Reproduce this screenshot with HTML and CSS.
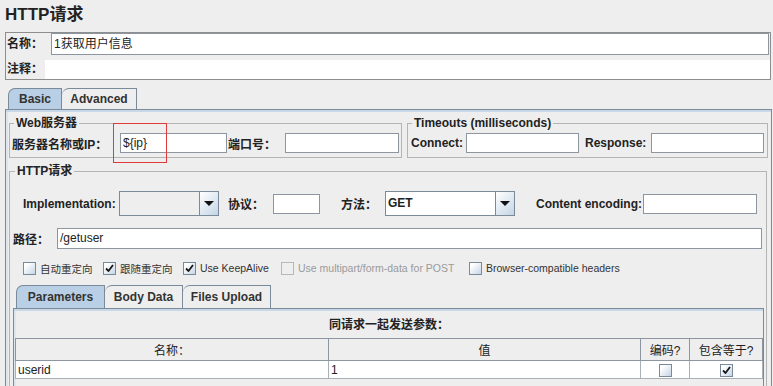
FILE: index.html
```html
<!DOCTYPE html>
<html>
<head>
    <title>HTTP请求</title>
    <link rel="stylesheet" href="styles.css">
</head>
<body>

<div class="title">HTTP请求</div>

<div class="namebox">
    <div class="nameRow">
        <label class="nameLabel">名称：</label>
        <div class="textBox nameField">1获取用户信息</div>
    </div>
    <div class="commentRow">
        <label class="commentLabel">注释：</label>
        <div class="commentField"></div>
    </div>
</div>

<div class="tabBar outerTabs">
    <div class="tab active basicTab">Basic</div>
    <div class="tab advTab">Advanced</div>
</div>

<div class="tabPanel">
    <div class="topGroups">
        <fieldset class="group webGroup">
            <legend>Web服务器</legend>
            <div class="groupRow">
                <label class="serverLabel">服务器名称或IP：</label>
                <div class="textBox serverField">${ip}</div>
                <label class="portLabel">端口号：</label>
                <div class="textBox portField"></div>
            </div>
        </fieldset>
        <fieldset class="group timeoutGroup">
            <legend>Timeouts (milliseconds)</legend>
            <div class="groupRow">
                <label class="connectLabel">Connect:</label>
                <div class="textBox timeField"></div>
                <label class="responseLabel">Response:</label>
                <div class="textBox timeField"></div>
            </div>
        </fieldset>
    </div>

    <fieldset class="group httpGroup">
        <legend>HTTP请求</legend>
        <div class="implRow">
            <label class="implLabel">Implementation:</label>
            <div class="combo implCombo">
                <div class="comboText"></div>
                <div class="comboBtn"><span class="arrow"></span></div>
            </div>
            <label class="protoLabel">协议：</label>
            <div class="textBox protoField"></div>
            <label class="methodLabel">方法：</label>
            <div class="combo methodCombo">
                <div class="comboText">GET</div>
                <div class="comboBtn"><span class="arrow"></span></div>
            </div>
            <label class="encLabel">Content encoding:</label>
            <div class="textBox encField"></div>
        </div>

        <div class="pathRow">
            <label class="pathLabel">路径：</label>
            <div class="textBox pathField">/getuser</div>
        </div>

        <div class="checkRow">
            <div class="checkItem w80"><span class="check"></span>自动重定向</div>
            <div class="checkItem w80"><span class="check checked"><svg width="9" height="8" viewBox="0 0 9 8"><path d="M1 4.5 L3.5 7 L8 1" fill="none" stroke="#1a1a1a" stroke-width="1.8"/></svg></span>跟随重定向</div>
            <div class="checkItem w98"><span class="check checked"><svg width="9" height="8" viewBox="0 0 9 8"><path d="M1 4.5 L3.5 7 L8 1" fill="none" stroke="#1a1a1a" stroke-width="1.8"/></svg></span>Use KeepAlive</div>
            <div class="checkItem w188 disabled"><span class="check off"></span>Use multipart/form-data for POST</div>
            <div class="checkItem"><span class="check"></span>Browser-compatible headers</div>
        </div>

        <div class="tabBar innerTabs">
            <div class="tab active paramTab">Parameters</div>
            <div class="tab bodyTab">Body Data</div>
            <div class="tab filesTab">Files Upload</div>
        </div>
        <div class="innerPanel">
            <div class="paramTitle">同请求一起发送参数：</div>
            <table class="paramTable">
                <thead>
                    <tr>
                        <th class="colName">名称：</th>
                        <th class="colValue">值</th>
                        <th class="colEnc">编码?</th>
                        <th class="colEq">包含等于?</th>
                    </tr>
                </thead>
                <tbody>
                    <tr>
                        <td>userid</td>
                        <td>1</td>
                        <td class="center"><span class="check small"></span></td>
                        <td class="center"><span class="check small checked"><svg width="9" height="8" viewBox="0 0 9 8"><path d="M1 4.5 L3.5 7 L8 1" fill="none" stroke="#1a1a1a" stroke-width="1.8"/></svg></span></td>
                    </tr>
                </tbody>
            </table>
        </div>
    </fieldset>
</div>

<div class="redMark"></div>

</body>
</html>
```

FILE: styles.css
```css
body {
    margin: 0;
    background-color: #eeeeee;
    font-family: "Liberation Sans", "Noto Sans CJK SC", sans-serif;
    font-size: 12px;
    font-weight: bold;
    color: #222222;
    width: 773px;
    height: 386px;
    overflow: hidden;
    position: relative;
}
label {
    white-space: nowrap;
}
.title {
    font-size: 17px;
    height: 32px;
    line-height: 30px;
    padding-left: 5px;
    box-sizing: border-box;
}

/* name / comment box */
.namebox {
    margin: 0 2px 0 5px;
    border: 1px solid #8e8e8e;
    height: 46px;
}
.nameRow {
    display: flex;
    height: 22px;
}
.nameLabel {
    width: 44px;
    padding-left: 1px;
    line-height: 22px;
}
.textBox {
    background-color: #ffffff;
    border: 1px solid #8c96a0;
    box-sizing: border-box;
    height: 20px;
    line-height: 18px;
    padding-left: 2px;
    font-weight: normal;
    white-space: nowrap;
}
.nameField {
    flex: 1;
    height: 22px;
    line-height: 20px;
    margin-right: 1px;
}
.commentRow {
    display: flex;
    margin-top: 5px;
    height: 19px;
}
.commentLabel {
    width: 38px;
    padding-left: 1px;
    line-height: 19px;
}
.commentField {
    flex: 1;
    background-color: #ffffff;
}

/* tabs */
.tabBar {
    display: flex;
}
.outerTabs {
    margin: 8px 0 0 8px;
    height: 21px;
}
.tab {
    box-sizing: border-box;
    border: 1px solid #7a8a99;
    border-bottom: none;
    border-top-left-radius: 7px;
    background-color: #eeeeee;
    text-align: center;
    line-height: 20px;
    color: #333333;
}
.tab.active {
    background-color: #b8cfe5;
}
.basicTab { width: 54px; }
.advTab { width: 75px; border-left: none; }

.tabPanel {
    margin-left: 5px;
    width: 767px;
    height: 277px;
    box-sizing: border-box;
    border: 1px solid #7a8a99;
    border-bottom: none;
    box-shadow: inset 0 2px 0 #c8d8e8, inset 2px 0 0 #dde6ef;
    padding: 6px 2px 0 3px;
    overflow: hidden;
}

/* groups */
.topGroups {
    display: flex;
    gap: 5px;
}
.group {
    border: 1px solid #b4b4b4;
    margin: 0;
    padding: 3px 2px 4px 2px;
    min-width: 0;
}
.group legend {
    padding: 0 2px;
    margin-left: 2px;
    line-height: 14px;
}
.webGroup { width: 393px; box-sizing: border-box; }
.timeoutGroup { width: 361px; box-sizing: border-box; }
.groupRow {
    display: flex;
    align-items: center;
    height: 20px;
}
.serverLabel { width: 108px; }
.serverField { width: 107px; }
.portLabel { width: 57px; margin-left: 1px; }
.portField { width: 114px; }
.connectLabel { width: 55px; margin-left: 1px; }
.responseLabel { width: 66px; margin-left: 6px; }
.timeField { width: 113px; }

.httpGroup {
    margin-top: 6px;
    width: 758px;
    box-sizing: border-box;
    padding: 13px 2px 0 3px;
    height: 240px;
}
.implRow {
    display: flex;
    align-items: center;
    height: 25px;
    padding-left: 10px;
}
.implLabel { width: 96px; }
.protoLabel { width: 45px; margin-left: 9px; }
.protoField { width: 47px; }
.methodLabel { width: 44px; margin-left: 21px; }
.encLabel { width: 107px; margin-left: 21px; }
.encField { width: 114px; }

.combo {
    display: flex;
    height: 25px;
    box-sizing: border-box;
    border: 1px solid #7a8a99;
}
.implCombo { width: 100px; }
.methodCombo { width: 130px; }
.comboText {
    flex: 1;
    line-height: 23px;
    padding-left: 2px;
}
.implCombo .comboText { background-color: #eeeeee; }
.methodCombo .comboText { background-color: #ffffff; }
.comboBtn {
    width: 18px;
    border-left: 1px solid #7a8a99;
    background: linear-gradient(135deg, #ffffff, #c4d5e6);
    display: flex;
    align-items: center;
    justify-content: center;
}
.arrow {
    width: 0;
    height: 0;
    border-left: 5px solid transparent;
    border-right: 5px solid transparent;
    border-top: 5px solid #111111;
}

.pathRow {
    display: flex;
    align-items: center;
    margin-top: 12px;
    height: 21px;
}
.pathLabel { width: 44px; }
.pathField { width: 705px; height: 21px; line-height: 19px; }

.checkRow {
    display: flex;
    align-items: center;
    margin-top: 12px;
    height: 14px;
    padding-left: 10px;
    font-size: 10.5px;
    font-weight: normal;
    color: #333333;
}
.checkItem {
    display: flex;
    align-items: center;
    white-space: nowrap;
}
.w80 { width: 80px; }
.w98 { width: 98px; }
.w188 { width: 188px; }
.disabled { color: #9a9a9a; }
.check {
    width: 13px;
    height: 13px;
    box-sizing: border-box;
    border: 1px solid #7a8a99;
    background: linear-gradient(135deg, #ffffff 20%, #c4d5e6);
    margin-right: 4px;
    display: inline-flex;
    align-items: center;
    justify-content: center;
}
.check.off {
    background: #eeeeee;
    border-color: #b8b8b8;
}
.check.small {
    margin: 0;
}

.innerTabs {
    margin: 10px 0 0 3px;
    height: 23px;
}
.innerTabs .tab { line-height: 22px; }
.paramTab { width: 89px; }
.bodyTab { width: 78px; border-left: none; }
.filesTab { width: 88px; border-left: none; }

.innerPanel {
    width: 751px;
    height: 90px;
    box-sizing: border-box;
    border: 1px solid #7a8a99;
    border-bottom: none;
    box-shadow: inset 0 2px 0 #c8d8e8, inset 2px 0 0 #dde6ef;
    padding: 8px 0 0 1px;
}
.paramTitle {
    text-align: center;
    height: 16px;
    line-height: 16px;
    margin-bottom: 5px;
}
.paramTable {
    border-collapse: collapse;
    width: 744px;
    font-weight: normal;
    table-layout: fixed;
}
.paramTable th {
    font-weight: normal;
    height: 21px;
    border: 1px solid #8c96a0;
    background-color: #eeeeee;
    padding: 0;
}
.paramTable td {
    height: 17px;
    border: 1px solid #a8b0b8;
    border-top: none;
    background-color: #ffffff;
    padding: 0 2px;
    line-height: 16px;
}
.colName { width: 312px; }
.colValue { width: 311px; }
.colEnc { width: 48px; }
.colEq { width: 72px; }
.center { text-align: center; }
.center .check { vertical-align: middle; }

/* annotation box drawn over the server field */
.redMark {
    position: absolute;
    left: 113px;
    top: 123px;
    width: 52px;
    height: 38px;
    border: 1px solid #e03a3a;
}
```
